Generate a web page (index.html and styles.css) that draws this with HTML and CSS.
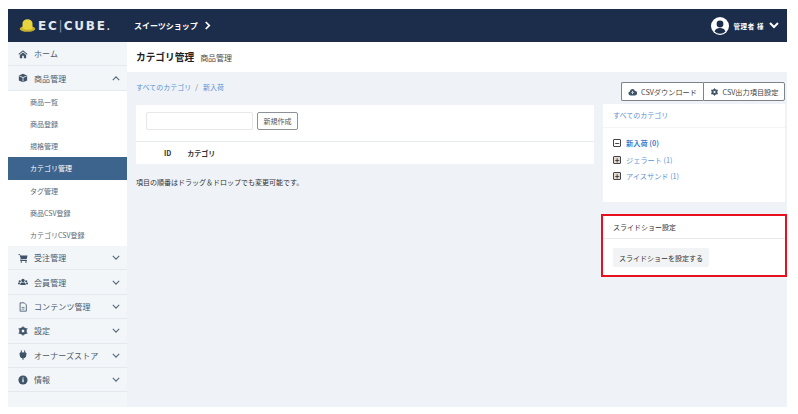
FILE: index.html
```html
<!DOCTYPE html>
<html lang="ja">
<head>
<meta charset="utf-8">
<title>カテゴリ管理</title>
<link rel="stylesheet" href="styles.css">
</head>
<body>
<div class="app">
  <header class="topbar">
    <div class="brand">
      <svg class="hat" viewBox="0 0 16 13"><ellipse cx="8" cy="9.800" rx="7.800" ry="3" fill="#c6b22e"/><path d="M3 8.500V4.500a5 4.200 0 0 1 10 0v4a5 2.200 0 0 1-10 0z" fill="#e8d53e"/></svg>
      <span class="logo">EC<i>|</i>CUBE<small>.</small></span>
    </div>
    <div class="shop">スイーツショップ <svg class="shop-chev" viewBox="0 0 8 10"><path d="M2 1l4 4-4 4" fill="none" stroke="#fff" stroke-width="2"/></svg></div>
    <div class="user">
      <svg class="avatar" viewBox="0 0 18 18"><circle cx="9" cy="9" r="9" fill="#fff"/><circle cx="9" cy="7" r="3.400" fill="#1b2d4b"/><path d="M3.500 14.500c1-3 3-3.600 5.500-3.600s4.500.6 5.500 3.600a8 8 0 0 1-11 0z" fill="#1b2d4b"/></svg>
      <span class="user-name">管理者 様</span>
      <svg class="user-chev" viewBox="0 0 10 7"><path d="M1 1l4 4 4-4" fill="none" stroke="#fff" stroke-width="2"/></svg>
    </div>
  </header>
  <div class="body">
    <nav class="side">
      <a class="nav"><svg class="ic" viewBox="0 0 12 12"><path d="M6 1.500L.5 6l.7.800L6 3l4.800 3.800.7-.8zM2.200 7.200V11h2.800V8h2v3h2.800V7.200L6 4.200z" fill="#3f5468"/></svg><span>ホーム</span></a>
      <a class="nav nav-open"><svg class="ic" viewBox="0 0 12 12"><path d="M6 .8l5 2.200v6L6 11.200 1 9V3z" fill="#3f5468"/><path d="M1.500 3.500L6 5.500l4.500-2M6 5.500v5" stroke="#fff" fill="none" stroke-width=".9"/></svg><span>商品管理</span><svg class="chev" viewBox="0 0 10 6"><path d="M1 5l4-4 4 4" fill="none" stroke="#54677a" stroke-width="1.400"/></svg></a>
      <ul class="sub">
        <li>商品一覧</li>
        <li>商品登録</li>
        <li>規格管理</li>
        <li class="active">カテゴリ管理</li>
        <li>タグ管理</li>
        <li>商品CSV登録</li>
        <li>カテゴリCSV登録</li>
      </ul>
      <a class="nav"><svg class="ic" viewBox="0 0 12 12"><path d="M.5 1.500h2l.5 1.500h8.500l-1.200 4.500H4l-.3 1h7v1H2.500l.8-2.200L2 2.500H.5z" fill="#3f5468"/><circle cx="4" cy="10.800" r="1" fill="#3f5468"/><circle cx="9.500" cy="10.800" r="1" fill="#3f5468"/></svg><span>受注管理</span><svg class="chev" viewBox="0 0 10 6"><path d="M1 1l4 4 4-4" fill="none" stroke="#54677a" stroke-width="1.400"/></svg></a>
      <a class="nav"><svg class="ic" viewBox="0 0 13 12"><circle cx="6.500" cy="4" r="2.200" fill="#3f5468"/><circle cx="2.300" cy="5" r="1.400" fill="#3f5468"/><circle cx="10.700" cy="5" r="1.400" fill="#3f5468"/><path d="M3 10V8.500C3 7 4.500 6.600 6.500 6.600S10 7 10 8.500V10zM0 9V7.500C0 7 1 6.800 2.500 6.800v2.200zM13 9V7.500c0-.5-1-.7-2.500-.7v2.200z" fill="#3f5468"/></svg><span>会員管理</span><svg class="chev" viewBox="0 0 10 6"><path d="M1 1l4 4 4-4" fill="none" stroke="#54677a" stroke-width="1.400"/></svg></a>
      <a class="nav"><svg class="ic" viewBox="0 0 12 12"><path d="M2.500 1h5l2.500 2.500V11h-7.500z" fill="none" stroke="#3f5468"/><path d="M4.300 6.500h3.500M4.300 8.500h3.500" stroke="#3f5468" stroke-width=".8"/></svg><span>コンテンツ管理</span><svg class="chev" viewBox="0 0 10 6"><path d="M1 1l4 4 4-4" fill="none" stroke="#54677a" stroke-width="1.400"/></svg></a>
      <a class="nav"><svg class="ic" viewBox="0 0 12 12"><circle cx="6" cy="6" r="3.300" fill="none" stroke="#3f5468" stroke-width="2.400"/><path d="M6 .5v11M.8 3l10.400 6M.8 9l10.400-6" stroke="#3f5468" stroke-width="1.500"/><circle cx="6" cy="6" r="1.500" fill="#f3f6f8"/></svg><span>設定</span><svg class="chev" viewBox="0 0 10 6"><path d="M1 1l4 4 4-4" fill="none" stroke="#54677a" stroke-width="1.400"/></svg></a>
      <a class="nav"><svg class="ic" viewBox="0 0 12 12"><path d="M4 .5v3M8 .5v3M2.500 3.500h7V6a3.500 3.500 0 0 1-7 0zM6 9v2.800" stroke="#3f5468" stroke-width="1.200" fill="#3f5468"/></svg><span>オーナーズストア</span><svg class="chev" viewBox="0 0 10 6"><path d="M1 1l4 4 4-4" fill="none" stroke="#54677a" stroke-width="1.400"/></svg></a>
      <a class="nav"><svg class="ic" viewBox="0 0 12 12"><circle cx="6" cy="6" r="5.500" fill="#3f5468"/><path d="M6 5.200v3.600M6 3v1.300" stroke="#fff" stroke-width="1.500"/></svg><span>情報</span><svg class="chev" viewBox="0 0 10 6"><path d="M1 1l4 4 4-4" fill="none" stroke="#54677a" stroke-width="1.400"/></svg></a>
    </nav>
    <main class="main">
      <div class="titlebar"><h1>カテゴリ管理</h1><span class="crumb">商品管理</span></div>
      <div class="content">
        <div class="col-left">
          <div class="breadcrumb"><a>すべてのカテゴリ</a><span class="sep">/</span><a>新入荷</a></div>
          <section class="panel">
            <div class="form-row"><div class="input"></div><button class="btn-new">新規作成</button></div>
            <div class="thead"><span class="th-id">ID</span><span>カテゴリ</span></div>
          </section>
          <p class="note">項目の順番はドラッグ＆ドロップでも変更可能です。</p>
        </div>
        <aside class="col-right">
          <div class="btn-group">
            <button class="btn-csv"><svg class="csv-ic" viewBox="0 0 12 10"><path d="M3 9.500a2.700 2.700 0 0 1-.5-5.300A3.500 3.500 0 0 1 9.300 3.500 3 3 0 0 1 9 9.500z" fill="#3f5468"/><path d="M6 3.500v3.500M4.500 5.500L6 7l1.500-1.500" stroke="#fff" fill="none"/></svg>CSVダウンロード</button>
            <button class="btn-csv"><svg class="csv-ic" viewBox="0 0 12 12"><circle cx="6" cy="6" r="3.300" fill="none" stroke="#3f5468" stroke-width="2.400"/><path d="M6 .5v11M.8 3l10.400 6M.8 9l10.400-6" stroke="#3f5468" stroke-width="1.500"/><circle cx="6" cy="6" r="1.500" fill="#fff"/></svg>CSV出力項目設定</button>
          </div>
          <section class="tree">
            <div class="tree-head">すべてのカテゴリ</div>
            <ul class="tree-list">
              <li class="strong"><span class="box">−</span>新入荷 (0)</li>
              <li><span class="box box-fill">+</span>ジェラート (1)</li>
              <li><span class="box box-fill">+</span>アイスサンド (1)</li>
            </ul>
          </section>
          <section class="slide">
            <div class="slide-head">スライドショー設定</div>
            <div class="slide-body"><button class="btn-slide">スライドショーを設定する</button></div>
          </section>
        </aside>
      </div>
    </main>
  </div>
</div>
</body>
</html>
```
FILE: styles.css
```css
* { box-sizing: border-box; }
html, body { height: 100%; }
body {
  margin: 0;
  padding: 9px 11px 7px 8px;
  background: #fff;
  color: #333;
  font-family: "Noto Sans CJK JP", "Noto Sans", sans-serif;
  font-size: 8px;
  overflow: hidden;
}
ul { list-style: none; margin: 0; padding: 0; }
button { font-family: inherit; cursor: pointer; }
.app { display: flex; flex-direction: column; height: 398px; }
.topbar {
  display: flex;
  align-items: center;
  flex: 0 0 33px;
  background: #1b2d4b;
  color: #fff;
}
.brand { display: flex; align-items: center; width: 119px; padding-left: 11px; }
.hat { width: 17px; height: 13px; }
.logo {
  margin-left: 2px;
  font-family: "DejaVu Sans", sans-serif;
  font-size: 12px;
  font-weight: 700;
  letter-spacing: 1.800px;
  color: #e3e8ed;
  white-space: nowrap;
}
.logo i { font-style: normal; font-weight: 400; color: #8c98a8; letter-spacing: 1px; }
.logo small { font-size: 8px; }
.shop { display: flex; align-items: center; gap: 6px; margin-left: 7px; font-size: 8px; font-weight: 700; }
.shop-chev { width: 7px; height: 9px; }
.user { display: flex; align-items: center; margin-left: auto; padding-right: 8px; }
.avatar { width: 18px; height: 18px; }
.user-name { margin-left: 5px; font-size: 6.500px; font-weight: 700; letter-spacing: .6px; }
.user-chev { width: 10px; height: 7px; margin-left: 5px; }
.body { display: flex; flex: 1; min-height: 0; }
.side { flex: 0 0 119px; background: #f3f6f8; color: #4a5a6a; }
.nav {
  display: flex;
  align-items: center;
  height: 24.400px;
  padding: 0 7px 0 10px;
  border-bottom: 1px solid #e4e9ee;
  font-size: 8px;
  letter-spacing: .1px;
}
.ic { flex: 0 0 10px; width: 10px; height: 10px; margin-right: 6px; }
.chev { width: 8px; height: 5px; margin-left: auto; }
.sub { background: #fff; padding: 0; }
.sub li { display: flex; align-items: center; height: 22.200px; padding-left: 22px; font-size: 7px; color: #5a6b7a; }
.sub li.active { background: #3c648c; color: #fff; }
.main { flex: 1; display: flex; flex-direction: column; background: #eff2f7; min-width: 0; }
.titlebar { display: flex; align-items: baseline; gap: 6px; flex: 0 0 30px; padding: 7px 0 0 9px; background: #fff; }
.titlebar h1 { margin: 0; font-size: 9.700px; font-weight: 700; color: #222; line-height: 16px; }
.crumb { font-size: 8px; color: #4a4a4a; }
.content { display: flex; flex: 1; padding-left: 9px; }
.col-left { width: 458px; }
.breadcrumb { display: flex; height: 33px; padding-top: 10px; font-size: 7px; color: #5b92d6; }
.sep { margin: 0 5px 0 4px; color: #777; }
.panel { background: #fff; height: 59px; }
.form-row { display: flex; align-items: center; gap: 4px; height: 32px; padding: 0 0 0 10px; }
.input { width: 107px; height: 18px; border: 1px solid #e6e8ea; border-radius: 2px; background: #fff; }
.btn-new { width: 41px; height: 18px; padding: 0; border: 1px solid #8d9296; border-radius: 2px; background: #fff; color: #555; font-size: 7px; }
.thead { display: flex; align-items: center; height: 23px; margin-top: 4px; border-top: 1px solid #e8ebee; font-size: 7px; font-weight: 700; color: #333; }
.th-id { margin: 0 16px 0 28px; }
.note { margin: 13px 0 0; font-size: 7px; color: #333; line-height: 11px; }
.col-right { flex: 0 0 183px; margin-left: 9px; }
.btn-group { display: flex; justify-content: flex-end; height: 19px; margin: 10px 2px 3px 0; }
.btn-csv {
  display: flex;
  align-items: center;
  justify-content: center;
  width: 82px;
  height: 19px;
  padding: 0;
  border: 1px solid #7d8489;
  background: #fff;
  color: #444;
  font-size: 7.200px;
  white-space: nowrap;
}
.btn-csv:first-child { border-radius: 2px 0 0 2px; border-right: 0; }
.btn-csv:last-child { border-radius: 0 2px 2px 0; }
.csv-ic { width: 9px; height: 8px; margin-right: 4px; }
.tree { background: #fff; height: 98px; width: 182px; }
.tree-head { height: 24px; padding: 6px 0 0 10px; border-bottom: 1px solid #f3f4f6; font-size: 7px; color: #5b92d6; line-height: 11px; }
.tree-list { padding-top: 7px; }
.tree-list li { display: flex; align-items: center; height: 16.500px; padding-left: 10px; font-size: 7.200px; color: #5b92d6; }
.tree-list li.strong { font-weight: 700; color: #3f7fce; }
.box {
  display: inline-flex;
  align-items: center;
  justify-content: center;
  width: 8px;
  height: 8px;
  margin-right: 5px;
  border: 1px solid #444;
  border-radius: 1px;
  color: #333;
  font-size: 8px;
  line-height: 1;
  font-weight: 700;
}
.box-fill { background: #ddd; }
.slide { width: 186px; height: 63px; margin: 12px 0 0 -2px; border: 2px solid #e8101f; background: #fff; }
.slide-head { height: 23px; padding: 6px 0 0 10px; border-bottom: 1px solid #e8ebee; font-size: 7px; color: #333; line-height: 11px; }
.slide-body { padding: 9px 10px; }
.btn-slide { width: 96px; height: 19px; padding: 0; border: 0; border-radius: 2px; background: #f1f3f5; color: #333; font-size: 7px; }
```
